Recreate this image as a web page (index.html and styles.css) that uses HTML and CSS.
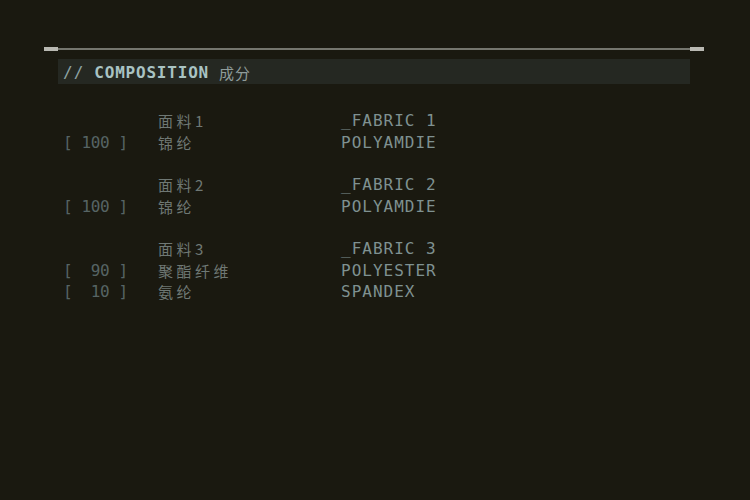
FILE: index.html
```html
<!DOCTYPE html>
<html>
<head>
<meta charset="utf-8">
<link rel="stylesheet" href="styles.css">
</head>
<body>
<div class="frame">
  <div class="rule"><span class="cap"></span><span class="line"></span><span class="cap"></span></div>
  <div class="panel">
    <div class="header"><span class="slash">//</span><span class="title">COMPOSITION</span><span class="zh-title">成分</span></div>
    <div class="list">
      <div class="group">
        <span class="pct"></span><span class="zh">面料1</span><span class="en">_FABRIC 1</span>
        <span class="pct">[ 100 ]</span><span class="zh">锦纶</span><span class="en">POLYAMDIE</span>
      </div>
      <div class="group">
        <span class="pct"></span><span class="zh">面料2</span><span class="en">_FABRIC 2</span>
        <span class="pct">[ 100 ]</span><span class="zh">锦纶</span><span class="en">POLYAMDIE</span>
      </div>
      <div class="group">
        <span class="pct"></span><span class="zh">面料3</span><span class="en">_FABRIC 3</span>
        <span class="pct">[&nbsp; 90 ]</span><span class="zh">聚酯纤维</span><span class="en">POLYESTER</span>
        <span class="pct">[&nbsp; 10 ]</span><span class="zh">氨纶</span><span class="en">SPANDEX</span>
      </div>
    </div>
  </div>
</div>
</body>
</html>
```
FILE: styles.css
```css
html, body {
  margin: 0;
  padding: 0;
  background: #1a1910;
  height: 100%;
}
.frame {
  padding: 46px 0 0 44px;
  width: 660px;
}
.rule {
  display: flex;
  align-items: center;
  height: 6px;
}
.cap {
  width: 14px;
  height: 4px;
  background: #b9b9b2;
}
.line {
  flex: 1;
  height: 2px;
  background: #75766e;
}
.panel {
  padding: 7px 14px 0 14px;
}
.header {
  height: 25px;
  background: #252822;
  display: flex;
  align-items: center;
  padding: 3px 0 0 5px;
  box-sizing: border-box;
  font-family: "DejaVu Sans Mono", monospace;
  font-size: 16px;
  line-height: 20px;
  color: #a9c3c3;
}
.slash {
  color: #8ea4a4;
  margin-right: 10px;
  letter-spacing: 1px;
}
.title {
  font-weight: bold;
  letter-spacing: 0.8px;
}
.zh-title {
  font-family: "Noto Sans CJK SC", sans-serif;
  font-size: 15px;
  color: #8f9c9a;
  margin-left: 10px;
  letter-spacing: 1px;
}
.list {
  padding: 26px 0 0 5px;
  display: flex;
  flex-direction: column;
  gap: 21px;
}
.group {
  display: grid;
  grid-template-columns: 95px 183px auto;
  grid-auto-rows: 21.5px;
  align-items: center;
  line-height: 21px;
}
.pct {
  font-family: "DejaVu Sans Mono", monospace;
  font-size: 16px;
  color: #566464;
  white-space: pre;
  letter-spacing: -0.4px;
}
.zh {
  font-family: "Noto Sans CJK SC", sans-serif;
  font-size: 15px;
  letter-spacing: 3.5px;
  color: #6f7874;
}
.en {
  font-family: "DejaVu Sans Mono", monospace;
  font-size: 16px;
  letter-spacing: 1px;
  color: #7f9191;
}
```
